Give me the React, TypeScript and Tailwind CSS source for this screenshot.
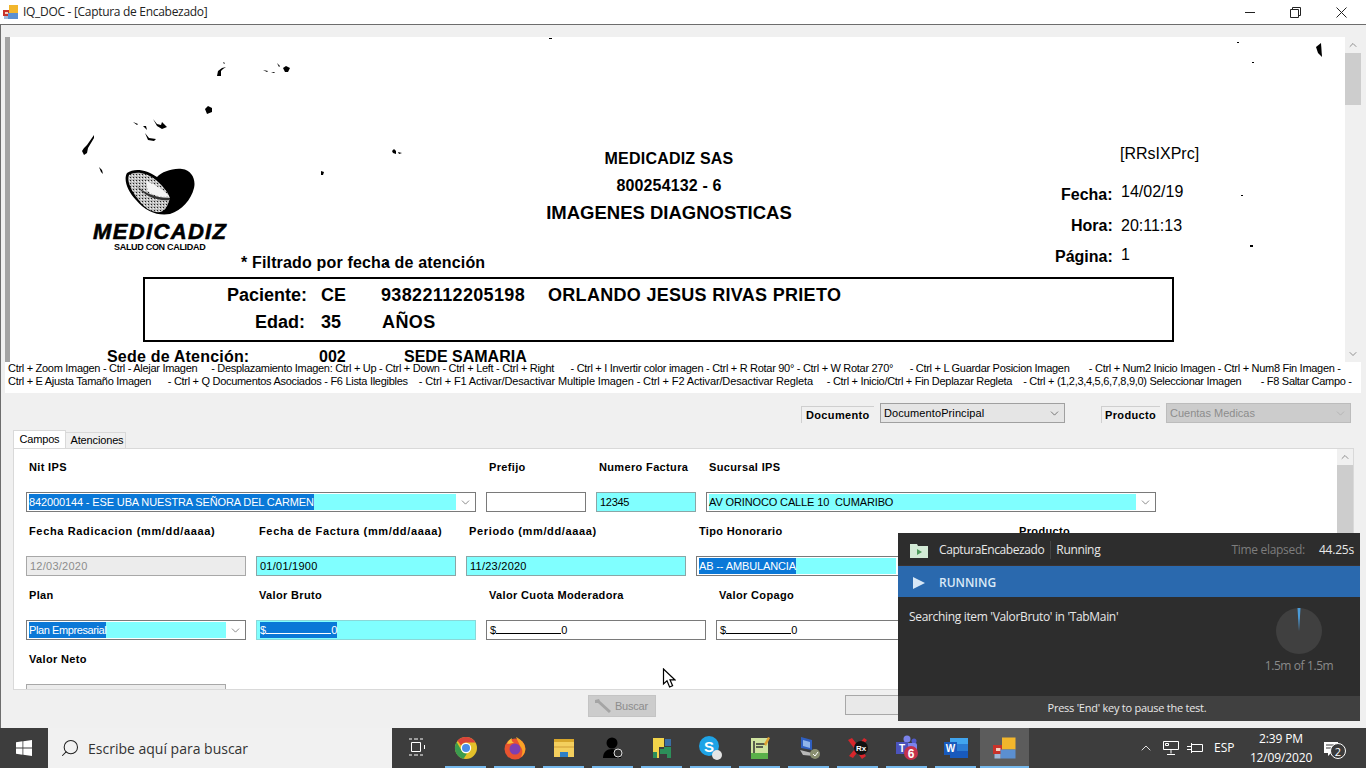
import type { ReactNode } from 'react';
import { ChevronDown, ChevronUp, Search } from 'lucide-react';

const hintLineOne =
  'Ctrl + Zoom Imagen - Ctrl - Alejar Imagen     - Desplazamiento Imagen: Ctrl + Up - Ctrl + Down - Ctrl + Left - Ctrl + Right      - Ctrl + I Invertir color imagen - Ctrl + R Rotar 90° - Ctrl + W Rotar 270°      - Ctrl + L Guardar Posicion Imagen       - Ctrl + Num2 Inicio Imagen - Ctrl + Num8 Fin Imagen -';

function AppIcon({ size = 16 }: { size?: number }) {
  return (
    <svg width={size} height={size} viewBox="0 0 16 16">
      <rect x="0" y="6" width="7" height="6" fill="#c8322a" />
      <rect x="2" y="8" width="3" height="2" fill="#f5d0c0" />
      <rect x="6" y="1" width="9" height="8" fill="#f2b62c" />
      <rect x="5" y="9" width="10" height="6" fill="#5b8fd0" />
      <rect x="1" y="12" width="4" height="3" fill="#9fb8d8" />
    </svg>
  );
}

function Field({ label, width, wide, children }: { label: string; width: string; wide?: boolean; children: ReactNode }) {
  return (
    <div className={`flex flex-col ${width}`}>
      <div className={`h-[32px] whitespace-nowrap pl-[3px] text-[11px] font-bold leading-[14px] text-black ${wide ? 'tracking-[0.65px]' : 'tracking-[0.35px]'}`}>
        {label}
      </div>
      {children}
    </div>
  );
}

function Combo({ value, selected, cyan, tight }: { value: string; selected?: boolean; cyan?: boolean; tight?: boolean }) {
  return (
    <div className="flex h-[20px] items-center border border-[#7a7a7a] bg-white pl-[2px] pr-[1px]">
      <div className={`flex h-[16px] min-w-0 flex-1 items-center ${cyan ? 'bg-[#80ffff]' : ''}`}>
        <span
          className={`whitespace-pre text-[11px] leading-[16px] ${tight ? 'tracking-[-0.4px]' : 'tracking-[-0.13px]'} ${selected ? 'bg-[#0a78d7] text-white' : 'text-black'}`}
        >
          {value}
        </span>
      </div>
      <div className="flex w-[18px] justify-center">
        <ChevronDown size={13} strokeWidth={1.25} className="text-[#555]" />
      </div>
    </div>
  );
}

function TextBox({ value, cyan, disabled, date }: { value: string; cyan?: boolean; disabled?: boolean; date?: boolean }) {
  const tone = disabled
    ? 'bg-[#ececec] border-[#a8a8a8] text-[#8d8d8d]'
    : cyan
      ? 'bg-[#80ffff] border-[#8aa6a6] text-black'
      : 'bg-white border-[#7a7a7a] text-black';
  return (
    <div className={`flex h-[20px] items-center border px-[3px] text-[11px] ${date ? 'tracking-[0.25px]' : 'tracking-[-0.3px]'} ${tone}`}>
      {value}
    </div>
  );
}

function Money({ cyan, selected }: { cyan?: boolean; selected?: boolean }) {
  return (
    <div className={`flex h-[20px] items-center border pl-[3px] text-[11px] ${cyan ? 'border-[#8ad8d8] bg-[#80ffff]' : 'border-[#7a7a7a] bg-white'}`}>
      <span className={`flex items-center ${selected ? 'bg-[#0a78d7] text-white' : 'text-black'}`}>
        $<span className={`mt-[6px] h-[1px] w-[65px] ${selected ? 'bg-white' : 'bg-black'}`} />0
      </span>
    </div>
  );
}

function ScanText({ className, children }: { className: string; children: ReactNode }) {
  return <div className={`absolute whitespace-nowrap leading-none text-black ${className}`}>{children}</div>;
}

function ScanPage() {
  return (
    <div className="relative min-w-0 flex-1 overflow-hidden bg-white font-['Liberation_Sans',sans-serif]">
      {/* specks of dirt on the scan */}
      <svg className="absolute left-0 top-0" width="1335" height="325" viewBox="0 0 1335 325">
        <g fill="#000" transform="translate(-10 -37)">
          <path d="M217 76l1-5 4-3 4-1-3 2-2 2 0 5zM223 62l2 1-1 1z" />
          <path d="M263 70l5 1-1 1zM271 72l4 0-1 1zM277 63l3 3-1 1zM283 68l3-2 4 2-2 4-3 0z" />
          <path d="M205 109l3-3 4 2 0 4-5 2z" />
          <path d="M133 122l5 2-1 1zM143 126l3 0 1 4-2-2zM153 119l4 5 4 1 1-3 5 5-5 2-5-3zM145 133l4 5 7 1-2 2-6-1z" />
          <path d="M94 135l-7 10-3 3-2 3 2 4 3-2 1-5 6-10z" />
          <path d="M99 167l3 3 1 4-2-2zM321 171l3 1-1 3-2 0zM392 151l2-2 2 2 0 3-3-1zM398 152l4 1-3 1z" />
          <path d="M1316 47l5-4 1 14-4-4z" />
          <path d="M549 38h3v1h-3zM1237 42h2v1h-2zM1252 62h2v1h-2zM1241 195h2v1h-2zM1250 245l3 0 0 2-3 0zM385 262h2v3h-2z" />
        </g>
      </svg>

      {/* logo */}
      <svg className="absolute left-[114px] top-[131px]" width="72" height="48" viewBox="0 0 72 48">
        <defs>
          <pattern id="speck" width="3" height="3" patternUnits="userSpaceOnUse">
            <rect width="3" height="3" fill="#bdbdbd" />
            <rect x="0" y="0" width="1" height="1" fill="#222" />
            <rect x="2" y="1" width="1" height="1" fill="#f2f2f2" />
          </pattern>
        </defs>
        <path d="M3 5C10 0 22 1 33 9 38 4 48 0 58 1 68 2 72 12 70 20 67 32 58 42 46 46 34 48 22 44 12 32 4 24-1 12 3 5z" fill="#000" />
        <path d="M5 7C11 3 22 4 32 12 38 17 44 24 46 30 44 37 42 42 37 44 28 45 20 40 14 31 8 24 2 12 5 7z" fill="url(#speck)" />
        <path d="M22 13C28 15 39 21 45 28 37 30 28 27 24 23z" fill="#f4f4f4" />
        <path d="M13 18c6 6 18 12 32 12l1 2c-14 1-26-4-33-14z" fill="#333" />
      </svg>
      <div className="absolute left-[83px] top-[185px] whitespace-nowrap text-[22px] font-bold italic leading-[20px] tracking-[1.35px] text-black [-webkit-text-stroke:0.6px_black]">
        MEDICADIZ
      </div>
      <ScanText className="left-[104px] top-[206px] text-[9px] font-bold tracking-[-0.3px]">SALUD CON CALIDAD</ScanText>

      {/* centred heading */}
      <div className="absolute left-[459px] top-[114px] flex w-[400px] flex-col items-center gap-[11px] font-bold text-black">
        <div className="text-[16px] leading-[16px] tracking-[0.2px]">MEDICADIZ SAS</div>
        <div className="text-[16px] leading-[16px] tracking-[0.15px]">800254132 - 6</div>
        <div className="text-[18.500px] leading-[16px]">IMAGENES DIAGNOSTICAS</div>
      </div>

      <ScanText className="left-[1110px] top-[109px] text-[16px]">[RRsIXPrc]</ScanText>
      <ScanText className="left-[1051px] top-[150px] text-[16px] font-bold">Fecha:</ScanText>
      <ScanText className="left-[1111px] top-[147px] text-[16px]">14/02/19</ScanText>
      <ScanText className="left-[1061px] top-[181px] text-[16px] font-bold">Hora:</ScanText>
      <ScanText className="left-[1111px] top-[181px] text-[16px]">20:11:13</ScanText>
      <ScanText className="left-[1045px] top-[212px] text-[16px] font-bold">Página:</ScanText>
      <ScanText className="left-[1111px] top-[210px] text-[16px]">1</ScanText>

      <ScanText className="left-[231px] top-[218px] text-[16px] font-bold tracking-[0.16px]">* Filtrado por fecha de atención</ScanText>

      {/* patient box on the scanned sheet */}
      <div className="absolute left-[133px] top-[240px] h-[65px] w-[1031px] border-2 border-black" />
      <ScanText className="left-[217px] top-[249px] text-[18px] font-bold">Paciente:</ScanText>
      <ScanText className="left-[311px] top-[249px] text-[18px] font-bold">CE</ScanText>
      <ScanText className="left-[371px] top-[249px] text-[18px] font-bold tracking-[0.35px]">93822112205198</ScanText>
      <ScanText className="left-[538px] top-[249px] text-[18px] font-bold tracking-[0.3px]">ORLANDO JESUS RIVAS PRIETO</ScanText>
      <ScanText className="left-[245px] top-[276px] text-[18px] font-bold">Edad:</ScanText>
      <ScanText className="left-[311px] top-[276px] text-[18px] font-bold">35</ScanText>
      <ScanText className="left-[372px] top-[276px] text-[18px] font-bold tracking-[0.4px]">AÑOS</ScanText>
      <ScanText className="left-[97px] top-[312px] text-[16px] font-bold tracking-[0.2px]">Sede de Atención:</ScanText>
      <ScanText className="left-[309px] top-[312px] text-[16px] font-bold">002</ScanText>
      <ScanText className="left-[394px] top-[312px] text-[16px] font-bold">SEDE SAMARIA</ScanText>
    </div>
  );
}

function ChromeIcon() {
  return (
    <svg width="24" height="24" viewBox="0 0 24 24">
      <circle cx="12" cy="12" r="11" fill="#e3c02a" />
      <path d="M12 1a11 11 0 0 1 9.5 5.5H12A5.5 5.5 0 0 0 7 9.5L3.4 4.6A11 11 0 0 1 12 1z" fill="#d9443a" />
      <path d="M2.6 6l4.8 8.2a5.5 5.5 0 0 0 5.6 3.2L9.600 22.700A11 11 0 0 1 2.600 6z" fill="#3b9c4f" />
      <circle cx="12" cy="12" r="5.200" fill="#fff" />
      <circle cx="12" cy="12" r="4" fill="#4a8de8" />
    </svg>
  );
}

function FirefoxIcon() {
  return (
    <svg width="24" height="24" viewBox="0 0 24 24">
      <circle cx="12" cy="13" r="10.500" fill="#e8532f" />
      <path d="M13 1c4 2 8 5 9 10 1 4-1 8-4 10 2-4 2-8-1-11-1-3-3-6-4-9z" fill="#f9a326" />
      <circle cx="12" cy="13" r="5.500" fill="#7d3fb0" />
      <path d="M4 8c1-3 3-5 5-6-1 2 0 4 2 5-3 0-5 1-7 1z" fill="#f6c13a" />
    </svg>
  );
}

function FolderIcon() {
  return (
    <svg width="24" height="24" viewBox="0 0 24 24">
      <rect x="2" y="3" width="20" height="4" fill="#d8a72c" />
      <rect x="2" y="6" width="20" height="15" fill="#f4cf5e" />
      <rect x="8" y="16" width="8" height="5" fill="#2f7fc8" />
      <rect x="2" y="10" width="20" height="2" fill="#e2b64a" />
    </svg>
  );
}

function LockedUserIcon() {
  return (
    <svg width="24" height="24" viewBox="0 0 24 24">
      <circle cx="11" cy="7" r="5.500" fill="#000" />
      <path d="M2 22c0-6 4-9 9-9s9 3 9 9z" fill="#000" />
      <circle cx="17" cy="17" r="4" fill="#2b2b2b" stroke="#ddd" strokeWidth="1" />
    </svg>
  );
}

function PuzzleIcon() {
  return (
    <svg width="24" height="24" viewBox="0 0 24 24">
      <path d="M3 2h11v9H9v11H3z" fill="#f2d44a" />
      <path d="M15 3h6v7h-6z" fill="#3a6ea5" />
      <path d="M10 13h4v-2h7v11h-4v-4h-7z" fill="#2d8f5a" />
      <path d="M3 16h4v6H3z" fill="#2d8f5a" />
    </svg>
  );
}

function SkypeIcon() {
  return (
    <svg width="26" height="26" viewBox="0 0 26 26">
      <circle cx="11" cy="11" r="10" fill="#1ea3e6" />
      <text x="11" y="16.500" textAnchor="middle" fontSize="15" fontWeight="700" fill="#fff" fontFamily="Liberation Sans">S</text>
      <circle cx="19" cy="20" r="5" fill="#e4e4e4" />
    </svg>
  );
}

function NotebookIcon() {
  return (
    <svg width="24" height="24" viewBox="0 0 24 24">
      <rect x="3" y="2" width="17" height="21" fill="#cfe3a0" />
      <rect x="3" y="17" width="17" height="6" fill="#5ab04a" />
      <path d="M6 5v12M8 8h9M8 11h7" stroke="#333" strokeWidth="1.500" />
      <path d="M16 8l4-7 2 1-4 8z" fill="#e0a030" />
    </svg>
  );
}

function ComputerIcon() {
  return (
    <svg width="24" height="24" viewBox="0 0 24 24">
      <path d="M4 1l11 3v10L4 12z" fill="#2f5fc0" />
      <path d="M6 4l7 2v6L6 10z" fill="#8fb4ea" />
      <path d="M3 14l12 3 2 3-11-1z" fill="#b9b9b9" />
      <circle cx="18" cy="18" r="5" fill="#8a8f70" />
      <path d="M16 18l2 2 3-4" stroke="#fff" strokeWidth="1" fill="none" />
    </svg>
  );
}

function RxIcon() {
  return (
    <svg width="24" height="24" viewBox="0 0 24 24">
      <path d="M2 4l4-2 14 18-4 3z" fill="#d8262c" />
      <path d="M18 2l3 2L7 22l-4-2z" fill="#d8262c" />
      <circle cx="15" cy="12" r="7" fill="#111" />
      <text x="15" y="15" textAnchor="middle" fontSize="8" fontWeight="700" fill="#fff" fontFamily="Liberation Sans">Rx</text>
    </svg>
  );
}

function TeamsIcon() {
  return (
    <svg width="26" height="26" viewBox="0 0 26 26">
      <circle cx="13" cy="4" r="3.500" fill="#7b83eb" />
      <circle cx="20" cy="6" r="2.500" fill="#5059c9" />
      <rect x="11" y="8" width="12" height="10" rx="2" fill="#7b83eb" />
      <rect x="2" y="7" width="12" height="12" fill="#4b53bc" />
      <text x="8" y="16.500" textAnchor="middle" fontSize="10" fontWeight="700" fill="#fff" fontFamily="Liberation Sans">T</text>
      <circle cx="17" cy="18" r="7" fill="#c4314b" />
      <text x="17" y="22.500" textAnchor="middle" fontSize="12" fontWeight="700" fill="#fff" fontFamily="Liberation Sans">6</text>
    </svg>
  );
}

function WordIcon() {
  return (
    <svg width="26" height="26" viewBox="0 0 26 26">
      <rect x="7" y="3" width="18" height="20" rx="1" fill="#2b7cd3" />
      <rect x="7" y="3" width="18" height="6" fill="#41a5ee" />
      <rect x="7" y="16" width="18" height="7" fill="#185abd" />
      <rect x="1" y="7" width="13" height="13" fill="#185abd" />
      <text x="7.500" y="17" textAnchor="middle" fontSize="10" fontWeight="700" fill="#fff" fontFamily="Liberation Sans">W</text>
    </svg>
  );
}

const taskbarApps: { key: string; icon: ReactNode; active?: boolean }[] = [
  { key: 'chrome', icon: <ChromeIcon /> },
  { key: 'firefox', icon: <FirefoxIcon /> },
  { key: 'folder', icon: <FolderIcon /> },
  { key: 'user', icon: <LockedUserIcon /> },
  { key: 'puzzle', icon: <PuzzleIcon /> },
  { key: 'skype', icon: <SkypeIcon /> },
  { key: 'notebook', icon: <NotebookIcon /> },
  { key: 'computer', icon: <ComputerIcon /> },
  { key: 'rx', icon: <RxIcon /> },
  { key: 'teams', icon: <TeamsIcon /> },
  { key: 'word', icon: <WordIcon /> },
  { key: 'iqdoc', icon: <AppIcon size={24} />, active: true },
];

function Taskbar() {
  return (
    <div className="flex h-[40px] shrink-0 items-stretch bg-[#3d3d3d] font-['Open_Sans',sans-serif] text-white">
      <div className="flex w-[48px] items-center justify-center">
        <svg width="16" height="16" viewBox="0 0 16 16" fill="#fff">
          <path d="M0 2.200l6.500-.9v6.300H0zM7.300 1.200L16 0v7.600H7.300zM0 8.400h6.500v6.300L0 13.800zM7.300 8.400H16V16l-8.700-1.200z" />
        </svg>
      </div>
      <div className="flex w-[344px] items-center gap-[8px] bg-[#f1f1f1] pl-[12px] text-[#333]">
        <Search size={20} strokeWidth={1.25} className="-scale-x-100 text-[#222]" />
        <span className="text-[14px]">Escribe aquí para buscar</span>
      </div>
      <div className="flex w-[49px] items-center justify-center">
        <svg width="18" height="20" viewBox="0 0 18 20" fill="none" stroke="#fff" strokeWidth="1">
          <path d="M1 1h3M6 1h4M12 1h3M3.500 4.500h9v9h-9zM1 17h3M6 17h4M12 17h3M16.500 7v4" />
        </svg>
      </div>
      {taskbarApps.map((app) => (
        <div
          key={app.key}
          className={`relative flex w-[49px] items-center justify-center ${app.active ? 'bg-[#5c5c5c]' : ''}`}
        >
          {app.icon}
          <div className={`absolute bottom-0 h-[2px] bg-[#76b9ed] ${app.active ? 'inset-x-0' : 'inset-x-[4px]'}`} />
        </div>
      ))}
      <div className="flex flex-1 items-center justify-end">
        <ChevronUp size={16} strokeWidth={1.25} />
        <svg className="ml-[8px]" width="18" height="16" viewBox="0 0 18 16" fill="none" stroke="#fff" strokeWidth="1">
          <path d="M1.500 1.500h15v8h-15zM9 9.500v4M5 14.500h8M3.500 3.500h3v2h-3z" />
        </svg>
        <svg className="ml-[6px]" width="18" height="14" viewBox="0 0 18 14" fill="none" stroke="#fff" strokeWidth="1">
          <path d="M5.500 3.500h11v7h-11M1 5.500h4M1 8.500h4M5.500 2v10" />
        </svg>
        <span className="ml-[10px] w-[24px] text-[12px]">ESP</span>
        <div className="ml-[16px] flex w-[54px] flex-col items-center whitespace-nowrap pt-[1px] text-[12px] leading-[18.500px] tracking-[-0.15px]">
          <span>2:39 PM</span>
          <span>12/09/2020</span>
        </div>
        <div className="relative ml-[14px] mr-[20px] flex h-[40px] w-[24px] items-center">
          <svg width="18" height="18" viewBox="0 0 18 18" fill="#fff">
            <path d="M2 3h14v11H9l-3 3v-3H2z" />
            <path d="M4 6h10M4 9h10" stroke="#3b3b3b" strokeWidth="1" />
          </svg>
          <div className="absolute left-[8px] top-[15px] flex h-[16px] w-[16px] items-center justify-center rounded-full border border-white bg-[#3b3b3b] text-[11px] leading-none">
            2
          </div>
        </div>
      </div>
    </div>
  );
}

function TestToast() {
  return (
    <div className="absolute left-[898px] top-[533px] flex h-[188px] w-[462px] flex-col bg-[#2d2d2d] font-['Open_Sans',sans-serif] text-[12px] text-[#e8e8e8]">
      <div className="flex h-[33px] items-center border-b border-[#3a3230] pl-[12px] pr-[5px] pt-[2px]">
        <svg width="18" height="16" viewBox="0 0 18 16">
          <path d="M0 2h7l1 2h10v12H0z" fill="#d3ead6" />
          <path d="M7 7l5 3-5 3z" fill="#4e9a5c" />
        </svg>
        <span className="ml-[11px] pr-[6px] tracking-[-0.4px]">CapturaEncabezado</span>
        <span className="border-l border-[#444] pl-[5px] tracking-[-0.35px]">Running</span>
        <span className="ml-auto tracking-[-0.3px] text-[#7d7d7d]">Time elapsed:</span>
        <span className="ml-[14px] mr-[1px] font-medium tracking-[-0.2px]">44.25s</span>
      </div>
      <div className="flex h-[31px] items-center bg-[#2a69ae] pl-[15px] pt-[2px] text-[#dbe9f7]">
        <svg width="12" height="12" viewBox="0 0 12 12" fill="#d7e7f6">
          <path d="M0 0l12 6-12 6z" />
        </svg>
        <span className="ml-[14px] font-semibold">RUNNING</span>
      </div>
      <div className="flex flex-1 justify-between pl-[11px] pr-[27px] pt-[11px]">
        <span className="tracking-[-0.33px]">Searching item 'ValorBruto' in 'TabMain'</span>
        <div className="flex w-[68px] flex-col items-center">
          <svg width="46" height="46" viewBox="0 0 46 46">
            <circle cx="23" cy="23" r="23" fill="#404040" />
            <path d="M23 23L21.500 0h3z" fill="#4b9bd8" />
          </svg>
          <span className="mt-[3px] whitespace-nowrap tracking-[-0.4px] text-[#8a8a8a]">1.5m of 1.5m</span>
        </div>
      </div>
      <div className="flex h-[25px] items-center justify-center bg-[#404040] pr-[4px] text-[11px] tracking-[-0.25px]">
        Press 'End' key to pause the test.
      </div>
    </div>
  );
}

export default function App() {
  return (
    <div className="relative flex h-[768px] w-[1366px] flex-col overflow-hidden bg-white font-['Liberation_Sans',sans-serif]">
      {/* Title bar */}
      <div className="flex h-[24px] shrink-0 items-center bg-white pl-[3px] font-['Open_Sans',sans-serif] text-[12px] text-[#222]">
        <AppIcon />
        <span className="ml-[4px] tracking-[-0.3px]">IQ_DOC - [Captura de Encabezado]</span>
        <div className="ml-auto flex items-center">
          <svg className="mr-[34px]" width="11" height="11" viewBox="0 0 11 11" stroke="#222">
            <path d="M0 5.500h10" />
          </svg>
          <svg className="mr-[35px]" width="11" height="11" viewBox="0 0 11 11" fill="none" stroke="#222">
            <path d="M.5 2.500h8v8h-8zM2.500 2.500v-2h8v8h-2" />
          </svg>
          <svg className="mr-[19px]" width="11" height="11" viewBox="0 0 11 11" fill="none" stroke="#222">
            <path d="M.5.500l10 10M10.500.500l-10 10" />
          </svg>
        </div>
      </div>

      {/* Form window */}
      <div className="flex min-h-0 flex-1 flex-col border-l border-t border-[#6d6d6d] bg-[#f0f0f0] pr-[5px]">
        <div className="h-[12px] shrink-0" />

        {/* Image viewer */}
        <div className="ml-[4px] flex h-[325px] shrink-0">
          <div className="w-[5px] bg-[#a4a4a4]" />
          <ScanPage />
          <div className="flex w-[16px] flex-col items-center bg-[#f0f0f0]">
            <ChevronUp size={12} strokeWidth={1.25} className="mt-[2px] text-[#555]" />
            <div className="mt-[2px] h-[52px] w-full bg-[#cdcdcd]" />
            <ChevronDown size={12} strokeWidth={1.25} className="mt-auto mb-[2px] text-[#555]" />
          </div>
        </div>

        {/* Keyboard hints */}
        <div className="ml-[4px] h-[31px] shrink-0 whitespace-pre bg-white pl-[3px] text-[11px] tracking-[-0.295px] text-black">
          <div className="h-[12px] leading-[12px]">{hintLineOne}</div>
          <div className="leading-[14px]">
            {'Ctrl + E Ajusta Tamaño Imagen      - Ctrl + Q Documentos Asociados - F6 Lista Ilegibles    '}
            <span className="tracking-[-0.13px]">- Ctrl + F1 Activar/Desactivar Multiple Imagen - Ctrl + F2 Activar/Desactivar Regleta</span>
            {'     - Ctrl + Inicio/Ctrl + Fin Deplazar Regleta    - Ctrl + (1,2,3,4,5,6,7,8,9,0) Seleccionar Imagen       - F8 Saltar Campo -'}
          </div>
        </div>

        {/* Document selectors */}
        <div className="flex h-[37px] shrink-0 items-end justify-end pb-[7px] pr-[10px] text-[11px]">
          <span className="flex h-[17px] w-[73px] items-center border-l border-t border-[#cfcfcf] pl-[4px] font-bold tracking-[0.35px] text-black">Documento</span>
          <div className="ml-[6px] w-[185px]">
            <div className="flex h-[20px] items-center justify-between border border-[#a0a0a0] bg-[#e5e5e5] pl-[3px] pr-[3px] tracking-[0.1px]">
              DocumentoPrincipal
              <ChevronDown size={13} strokeWidth={1.25} className="text-[#444]" />
            </div>
          </div>
          <span className="ml-[36px] flex h-[17px] w-[59px] items-center border-l border-t border-[#cfcfcf] pl-[3px] font-bold tracking-[0.35px] text-black">Producto</span>
          <div className="ml-[6px] w-[185px]">
            <div className="flex h-[20px] items-center justify-between border border-[#bcbcbc] bg-[#cccccc] pl-[3px] pr-[3px] text-[#8d8d8d]">
              Cuentas Medicas
              <ChevronDown size={13} strokeWidth={1.25} className="text-[#aaa]" />
            </div>
          </div>
        </div>

        {/* Tabs */}
        <div className="ml-[12px] flex h-[18px] shrink-0 items-end text-[11px] text-black">
          <div className="z-10 flex h-[18px] w-[53px] items-center justify-center rounded-t-[1px] border border-b-0 border-[#d9d9d9] bg-white tracking-[-0.2px]">Campos</div>
          <div className="flex h-[16px] w-[60px] items-center justify-center border-r border-t border-[#d9d9d9] pl-[3px] tracking-[-0.15px]">Atenciones</div>
        </div>

        {/* Tab panel */}
        <div className="ml-[12px] mr-[7px] flex h-[242px] shrink-0 border border-[#d9d9d9] bg-white">
          <div className="min-w-0 flex-1 overflow-hidden pl-[12px] pt-[11px]">
            <div className="flex h-[64px] gap-[10px]">
              <Field label="Nit IPS" width="w-[450px]">
                <Combo value="842000144 - ESE UBA NUESTRA SEÑORA DEL CARMEN" selected cyan />
              </Field>
              <Field label="Prefijo" width="w-[100px]">
                <TextBox value="" />
              </Field>
              <Field label="Numero Factura" width="w-[100px]">
                <TextBox value="12345" cyan />
              </Field>
              <Field label="Sucursal IPS" width="w-[450px]">
                <Combo value="AV ORINOCO CALLE 10  CUMARIBO" cyan />
              </Field>
            </div>
            <div className="flex h-[64px] gap-[10px]">
              <Field label="Fecha Radicacion (mm/dd/aaaa)" width="w-[220px]" wide>
                <TextBox value="12/03/2020" disabled date />
              </Field>
              <Field label="Fecha de Factura (mm/dd/aaaa)" width="w-[200px]" wide>
                <TextBox value="01/01/1900" cyan date />
              </Field>
              <Field label="Periodo (mm/dd/aaaa)" width="w-[220px]" wide>
                <TextBox value="11/23/2020" cyan date />
              </Field>
              <Field label="Tipo Honorario" width="w-[220px]">
                <Combo value="AB -- AMBULANCIA" selected cyan />
              </Field>
              <div className="ml-[90px]">
                <Field label="Producto" width="w-[220px]">
                  <Combo value="Cuentas Medicas" />
                </Field>
              </div>
            </div>
            <div className="flex h-[64px] gap-[10px]">
              <Field label="Plan" width="w-[220px]">
                <Combo value="Plan Empresarial" selected cyan tight />
              </Field>
              <Field label="Valor Bruto" width="w-[220px]">
                <Money cyan selected />
              </Field>
              <Field label="Valor Cuota Moderadora" width="w-[220px]">
                <Money />
              </Field>
              <Field label="Valor Copago" width="w-[220px]">
                <Money />
              </Field>
            </div>
            <Field label="Valor Neto" width="w-[200px]">
              <TextBox value="" disabled />
            </Field>
          </div>
          <div className="flex w-[16px] flex-col items-center bg-[#f0f0f0]">
            <ChevronUp size={12} strokeWidth={1.25} className="mt-[2px] text-[#555]" />
            <div className="mt-[2px] h-[140px] w-full bg-[#cdcdcd]" />
          </div>
        </div>

        {/* Bottom buttons */}
        <div className="flex min-h-0 flex-1 pl-[587px] pt-[5px]">
          <div className="flex h-[22px] w-[68px] items-center justify-center gap-[2px] border border-[#c4c4c4] bg-[#cccccc] pr-[3px] text-[11px] tracking-[-0.2px] text-[#8d8d8d]">
            <svg width="20" height="16" viewBox="0 0 20 16" fill="#a5a5a5">
              <path d="M2 2l4-1 1 2 11 10-2 2L5 5 2 5z" />
            </svg>
            Buscar
          </div>
          <div className="ml-[189px] h-[20px] w-[100px] border border-[#a8a8a8] bg-[#e9e9e9]" />
        </div>
      </div>

      <Taskbar />
      <TestToast />

      {/* Mouse pointer */}
      <svg className="absolute left-[662px] top-[668px]" width="14" height="22" viewBox="0 0 14 22">
        <path d="M1.500 1v15l3.500-3.200 2.600 6.200 3-1.300-2.600-5.900h4.800z" fill="#fff" stroke="#000" strokeWidth="1.200" />
      </svg>
    </div>
  );
}
